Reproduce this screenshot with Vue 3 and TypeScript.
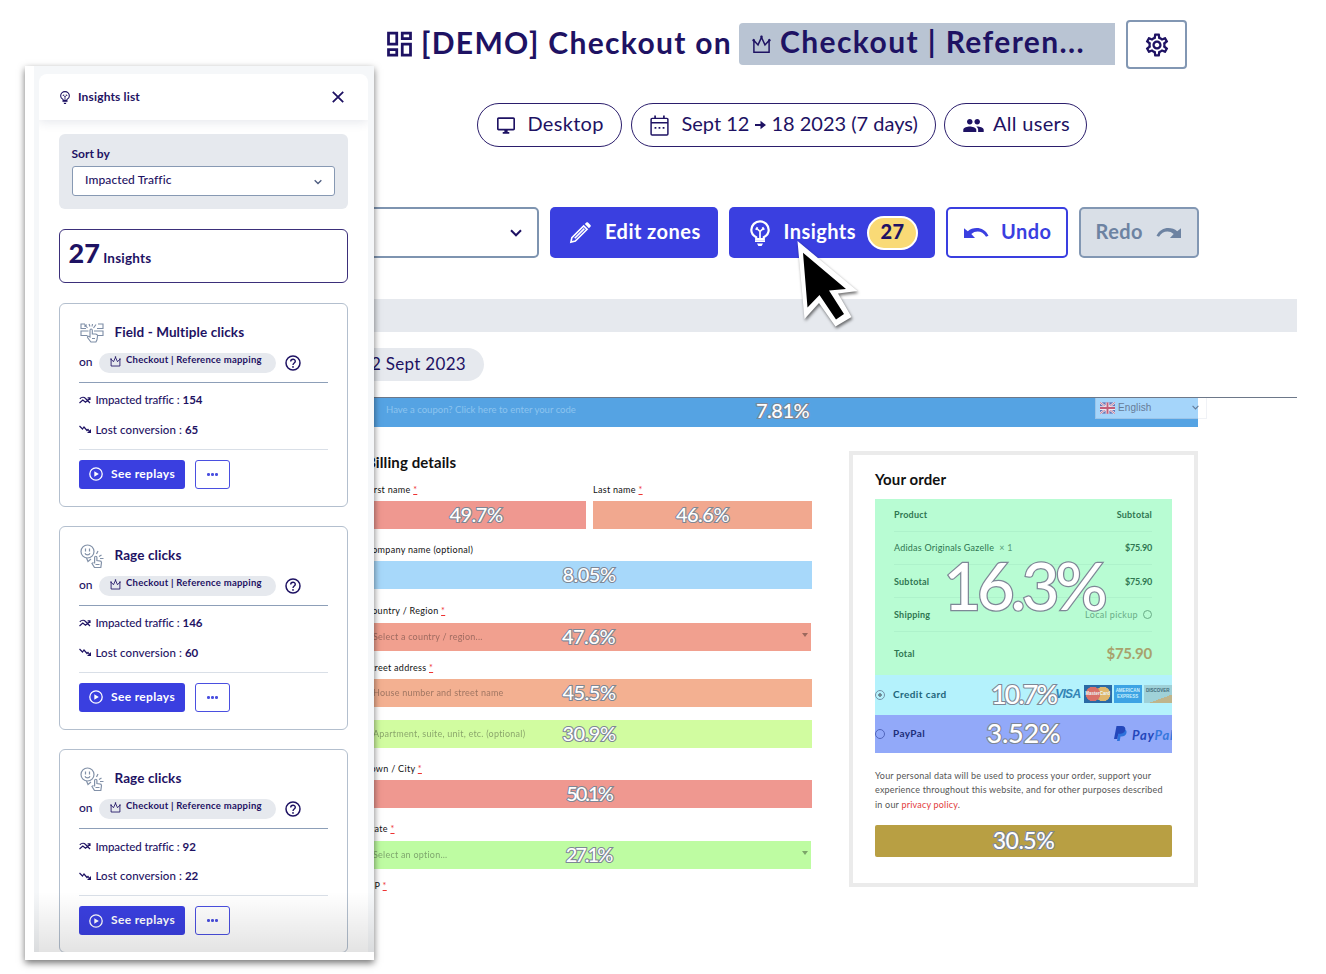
<script setup lang="ts">
interface Insight {
  kind: 'field' | 'rage'
  title: string
  traffic: number
  lost: number
}

interface Field {
  label?: string
  required?: boolean
  placeholder?: string
  value: string
  tone: string
  select?: boolean
  tight?: boolean
}

const insights: Insight[] = [
  { kind: 'field', title: 'Field - Multiple clicks', traffic: 154, lost: 65 },
  { kind: 'rage', title: 'Rage clicks', traffic: 146, lost: 60 },
  { kind: 'rage', title: 'Rage clicks', traffic: 92, lost: 22 },
]

const fields: Field[] = [
  { label: 'Company name (optional)', value: '8.05%', tone: 'sky' },
  { label: 'Country / Region', required: true, placeholder: 'Select a country / region...', value: '47.6%', tone: 'salmon', select: true },
  { label: 'Street address', required: true, placeholder: 'House number and street name', value: '45.5%', tone: 'orange' },
  { placeholder: 'Apartment, suite, unit, etc. (optional)', value: '30.9%', tone: 'lime' },
  { label: 'Town / City', required: true, value: '50.1%', tone: 'red', tight: true },
  { label: 'State', required: true, placeholder: 'Select an option...', value: '27.1%', tone: 'green', select: true, tight: true },
]
</script>

<template>
  <div class="screen">
    <svg class="defs" width="0" height="0" aria-hidden="true">
      <symbol id="crown" viewBox="0 0 18 18">
        <path d="M1.800 16.400V5.200L5.700 9.400 9 2.200l3.300 7.200 3.900-4.200v11.200z" fill="none" stroke="currentColor" stroke-width="1.400" />
        <circle cx="1.600" cy="5" r="1.200" fill="currentColor" /><circle cx="16.400" cy="5" r="1.200" fill="currentColor" /><circle cx="9" cy="1.600" r="1.200" fill="currentColor" />
      </symbol>
      <symbol id="bulb" viewBox="0 0 20 26">
        <path d="M6.200 19.200v-2C3.400 15.700 1.300 13.300 1.300 10a8.700 8.700 0 0 1 17.400 0c0 3.300-2.100 5.700-4.900 7.200v2z" fill="none" stroke="currentColor" stroke-width="2.200" />
        <path d="M10 18.500V11.500L6.300 8M10 11.500L13.700 8M5.800 9.800l1.700-2.600M14.200 9.800l-1.700-2.600" fill="none" stroke="currentColor" stroke-width="1.700" />
        <path d="M5 20.300h10v1.700H5zM7 23.400h6L11.600 26H8.400z" fill="currentColor" />
      </symbol>
      <symbol id="chevron" viewBox="0 0 12 8"><path d="M1 1.300l5 5 5-5" fill="none" stroke="currentColor" stroke-width="2" /></symbol>
      <symbol id="undo" viewBox="0 0 25 11" preserveAspectRatio="none">
        <path d="M0 1.200L3.800 4.200C9.500-.9 20.500-.4 24.500 8.800L22 9.800C18.800 4 12 2.800 7.300 7L11 11H0z" fill="currentColor" />
      </symbol>
    </svg>

    <main>
      <header class="title-row">
        <svg class="dash" viewBox="0 0 24 24"><path d="M19 5v2h-4V5h4M9 5v6H5V5h4m10 8v6h-4v-6h4M9 17v2H5v-2h4M21 3h-8v6h8V3zM11 3H3v10h8V3zm10 8h-8v10h8V11zm-10 4H3v6h8v-6z" fill="currentColor" /></svg>
        <h1>[DEMO] Checkout on</h1>
        <div class="page-chip"><svg><use href="#crown" /></svg><span>Checkout | Referen...</span></div>
        <button class="gear" aria-label="Settings">
          <svg viewBox="1.500 1.500 21 21"><path d="M19.430 12.980c.04-.32.070-.64.070-.98s-.03-.66-.07-.98l2.110-1.650c.19-.15.24-.42.120-.64l-2-3.460c-.09-.16-.26-.25-.44-.25-.06 0-.12.010-.17.030l-2.490 1c-.52-.4-1.080-.73-1.690-.98l-.38-2.650C14.460 2.180 14.250 2 14 2h-4c-.25 0-.46.180-.49.420l-.38 2.650c-.61.25-1.170.59-1.690.98l-2.490-1c-.06-.02-.12-.03-.18-.03-.17 0-.34.090-.43.250l-2 3.460c-.13.22-.07.490.120.640l2.110 1.650c-.04.320-.07.650-.07.980s.03.660.070.980l-2.110 1.650c-.19.150-.24.420-.12.640l2 3.460c.09.160.26.250.44.250.06 0 .12-.01.170-.03l2.490-1c.52.400 1.080.730 1.690.980l.38 2.650c.03.240.240.420.490.420h4c.25 0 .46-.18.490-.42l.38-2.650c.61-.25 1.170-.59 1.690-.98l2.490 1c.06.020.120.030.180.030.17 0 .34-.09.430-.25l2-3.460c.12-.22.070-.49-.12-.64l-2.110-1.650zm-1.980-1.710c.04.310.050.520.050.730s-.02.430-.05.730l-.14 1.130.890.700 1.080.840-.7 1.210-1.270-.51-1.040-.42-.9.680c-.43.320-.84.560-1.250.730l-1.060.43-.16 1.130-.2 1.350h-1.400l-.19-1.350-.16-1.130-1.060-.43c-.43-.18-.83-.41-1.230-.71l-.91-.7-1.060.43-1.270.51-.7-1.210 1.080-.84.890-.7-.14-1.130c-.03-.31-.05-.54-.05-.74s.02-.43.050-.73l.14-1.130-.89-.7-1.080-.84.700-1.210 1.270.51 1.040.42.900-.68c.43-.32.840-.56 1.250-.73l1.060-.43.160-1.130.2-1.350h1.390l.19 1.350.160 1.130 1.060.43c.43.180.830.410 1.230.71l.91.700 1.060-.43 1.270-.51.700 1.210-1.070.85-.89.700.140 1.130zM12 8c-2.210 0-4 1.790-4 4s1.790 4 4 4 4-1.790 4-4-1.790-4-4-4zm0 6c-1.100 0-2-.9-2-2s.9-2 2-2 2 .9 2 2-.9 2-2 2z" fill="currentColor" /></svg>
        </button>
      </header>

      <div class="pills">
        <div class="pill desktop"><svg viewBox="1 2 22 20"><path d="M21 2H3c-1.100 0-2 .9-2 2v12c0 1.100.9 2 2 2h7v2H8v2h8v-2h-2v-2h7c1.100 0 2-.9 2-2V4c0-1.100-.9-2-2-2zm0 14H3V4h18v12z" fill="currentColor" /></svg><span>Desktop</span></div>
        <div class="pill dates">
          <svg viewBox="0 0 18 20"><path d="M2 3.200h14a1 1 0 0 1 1 1V18a1 1 0 0 1-1 1H2a1 1 0 0 1-1-1V4.200a1 1 0 0 1 1-1zM1 7.300h16" fill="none" stroke="currentColor" stroke-width="1.400" /><path d="M4 .5h1.600v3H4zM12.400.5H14v3h-1.600zM4.300 11.500h1.700v1.600H4.300zM8.100 11.500h1.700v1.600H8.100zM12 11.500h1.700v1.600H12z" fill="currentColor" /></svg>
          <span>Sept 12</span><svg class="arrow" viewBox="0 0 12 10"><path d="M0 3.800h6V.4L12 5 6 9.600V6.200H0z" fill="currentColor" /></svg><span>18 2023 (7 days)</span>
        </div>
        <div class="pill users"><svg viewBox="1 5 22 14"><path d="M16 11c1.660 0 2.990-1.340 2.990-3S17.660 5 16 5s-3 1.340-3 3 1.340 3 3 3zm-8 0c1.660 0 2.990-1.340 2.990-3S9.660 5 8 5 5 6.340 5 8s1.340 3 3 3zm0 2c-2.330 0-7 1.170-7 3.500V19h14v-2.500c0-2.330-4.670-3.500-7-3.500zm8 0c-.29 0-.62.020-.97.050 1.160.84 1.970 1.970 1.970 3.450V19h6v-2.500c0-2.330-4.670-3.500-7-3.500z" fill="currentColor" /></svg><span>All users</span></div>
      </div>

      <div class="toolbar">
        <div class="dropdown"><svg><use href="#chevron" /></svg></div>
        <button class="tool edit"><svg viewBox="0 0 24 24"><path d="M2 22l1-4.600L15.300 5.100l3.600 3.600L6.600 21zM6 18L16 8" fill="none" stroke="currentColor" stroke-width="1.700" /><path d="M16.500 3.200l1.600-1.600c.5-.5 1.200-.5 1.700 0l2.600 2.600c.5.5.5 1.200 0 1.700l-1.600 1.600z" fill="currentColor" /></svg><span>Edit zones</span></button>
        <button class="tool insights"><svg><use href="#bulb" /></svg><span>Insights</span><b>27</b></button>
        <button class="tool undo"><svg><use href="#undo" /></svg><span>Undo</span></button>
        <button class="tool redo"><span>Redo</span><svg><use href="#undo" /></svg></button>
      </div>

      <div class="band"></div>
      <div class="date-row"><span>12 Sept 2023</span></div>

      <section class="site">
        <div class="coupon">
          <span>Have a coupon? Click here to enter your code</span>
          <strong class="pct">7.81%</strong>
          <div class="lang">
            <svg viewBox="0 0 16 12"><path fill="#6676b6" d="M0 0h16v12H0z" /><path d="M0 0l16 12M16 0L0 12" stroke="#e5e6f2" stroke-width="2.200" /><path d="M0 0l16 12M16 0L0 12" stroke="#c8657f" stroke-width=".8" /><path d="M8 0v12M0 6h16" stroke="#eceaf3" stroke-width="4" /><path d="M8 0v12M0 6h16" stroke="#c35d78" stroke-width="2" /></svg>
            <span>English</span><svg class="chev"><use href="#chevron" /></svg>
          </div>
        </div>

        <div class="columns">
          <form class="billing">
            <h2>Billing details</h2>
            <div class="names">
              <div class="group"><label>First name <i>*</i></label><div class="field red"><strong class="pct">49.7%</strong></div></div>
              <div class="group"><label>Last name <i>*</i></label><div class="field peach"><strong class="pct">46.6%</strong></div></div>
            </div>
            <div v-for="f in fields" :key="f.value" class="group">
              <label v-if="f.label">{{ f.label }} <i v-if="f.required">*</i></label>
              <div class="field" :class="[f.tone, { select: f.select }]">
                <span>{{ f.placeholder }}</span>
                <strong class="pct" :class="{ tight: f.tight }">{{ f.value }}</strong>
                <em v-if="f.select"></em>
              </div>
            </div>
            <label class="last">ZIP <i>*</i></label>
          </form>

          <aside class="order">
            <h2>Your order</h2>
            <div class="summary">
              <div class="line"><b>Product</b><b>Subtotal</b></div>
              <div class="line"><span>Adidas Originals Gazelle&nbsp; <small>× 1</small></span><b class="money">$75.90</b></div>
              <div class="line"><b>Subtotal</b><b class="money">$75.90</b></div>
              <div class="line"><b>Shipping</b><span class="pickup">Local pickup <i></i></span></div>
              <div class="line total"><b>Total</b><b class="sum">$75.90</b></div>
              <strong class="pct huge">16.3%</strong>
            </div>
            <div class="pay card">
              <i class="radio on"></i><b>Credit card</b>
              <strong class="pct">10.7%</strong>
              <div class="brands">
                <span class="visa">VISA</span>
                <span class="mc"><u>MasterCard</u></span>
                <span class="amex"><u>AMERICAN</u><u>EXPRESS</u></span>
                <span class="disc"><u>DISCOVER</u></span>
              </div>
            </div>
            <div class="pay paypal">
              <i class="radio"></i><b>PayPal</b>
              <strong class="pct">3.52%</strong>
              <div class="pp"><svg viewBox="0 0 13 15"><path d="M5 3h5c2.500.5 3 2.500 2.300 4.500-.7 2-2.400 3-4.800 3h-1L5.700 15H3z" fill="#2d72dc" /><path d="M2.500 0h5.200c3 0 4.100 1.700 3.500 4.100-.6 2.600-2.500 3.700-5 3.700H4.300L3.300 13H0z" fill="#2447bb" /></svg><span>Pay<u>Pal</u></span></div>
            </div>
            <p>Your personal data will be used to process your order, support your<br>experience throughout this website, and for other purposes described<br>in our <a>privacy policy</a>.</p>
            <div class="place"><strong class="pct">30.5%</strong></div>
          </aside>
        </div>
      </section>
    </main>

    <div class="panel">
      <div class="panel-bg">
        <div class="sheet">
          <div class="sheet-head"><svg class="bulb"><use href="#bulb" /></svg><span>Insights list</span><svg class="close" viewBox="0 0 12 12"><path d="M.8.8l10.400 10.400M11.200.8L.8 11.200" stroke="currentColor" stroke-width="1.800" /></svg></div>
          <div class="sheet-body">
            <div class="sort"><label>Sort by</label><div class="sort-select"><span>Impacted Traffic</span><svg><use href="#chevron" /></svg></div></div>
            <div class="count"><b>27</b><span>Insights</span></div>
            <article v-for="(n, i) in insights" :key="i" class="insight">
              <div class="head">
                <svg v-if="n.kind === 'field'" viewBox="0 0 24 20" fill="none" stroke="#7d8da6" stroke-width="1.100"><path d="M6 5.500H1V1h4M17 5.500h6V1h-5M5 2l2.500 3M5 4V2h2M9 1l1 2.500M12.500 1l-.5 2.500M16 1.500L13.500 5M7.500 12.500H1V8h7.500M14 8h9v4.500h-6M10 14V7.200c0-1.700 2.300-1.700 2.300 0V11h3c1.600 0 2.400.8 2.200 2.400l-.6 3.600-1 2h-5l-3.400-4.500c-.5-1 .7-1.700 1.500-1zM12 15.500h3" /></svg>
                <svg v-else viewBox="0 0 24 24" fill="none" stroke="#8291a8" stroke-width="1.200"><circle cx="7.500" cy="7.500" r="6.500" /><path d="M5.500 4.500v3M9.500 4.500v3M5 9.300c.8 2.200 4.200 2.200 5 0M6.500 14l1.500 3.500 3-2.500M13.500 18.500l-1.500 1 2.500 4h6.300l.7-5c0-1-.8-1.600-2-1.600l-2.600-.4V13.500c0-1.700-2.300-1.700-2.300 0v6M15.500 20.500h4M16.500 10l1.500-3M19 12.500l2.500-1.500M20 14.500h3.500" /></svg>
                <h3>{{ n.title }}</h3>
              </div>
              <div class="where"><span>on</span><div class="chip"><svg><use href="#crown" /></svg><span>Checkout | Reference mapping</span></div>
                <svg class="help" viewBox="0 0 16 16"><circle cx="8" cy="8" r="7" fill="none" stroke="currentColor" stroke-width="1.500" /><path d="M5.700 6.500c0-3 4.600-3 4.600-.2C10.300 8 8 8 8 9.900" fill="none" stroke="currentColor" stroke-width="1.400" /><circle cx="8" cy="11.900" r=".9" fill="currentColor" /></svg>
              </div>
              <div class="stats">
                <div><svg viewBox="0 0 12 8" fill="none" stroke="currentColor" stroke-width="1.200"><path d="M.5 7l3.300-3 2.700 2.300L11 2.500M.8 2.800C3 .8 5 .8 6.500 2.500L11 7M8.600 1.800H11V4" /></svg><span>Impacted traffic :</span><b>{{ n.traffic }}</b></div>
                <div class="lost"><svg viewBox="0 0 12 8" fill="none" stroke="currentColor" stroke-width="1.200"><path d="M.5 1l3 3 1.500-2L8 5.500l1-1L11 7" /><path d="M12 4v4H8z" fill="currentColor" stroke="none" /></svg><span>Lost conversion :</span><b>{{ n.lost }}</b></div>
              </div>
              <div class="actions">
                <button class="replay"><svg viewBox="0 0 14 14"><circle cx="7" cy="7" r="6.200" fill="none" stroke="currentColor" stroke-width="1.300" /><path d="M5.300 4.300L9.800 7l-4.500 2.700z" fill="currentColor" /></svg><span>See replays</span></button>
                <button class="more"><i></i><i></i><i></i></button>
              </div>
            </article>
          </div>
        </div>
      </div>
      <div class="fade"></div>
    </div>

    <svg class="cursor" viewBox="0 0 64 90"><path d="M1.500 1L61.500 51 42 53.500 55.500 77 39.500 86.500 23 63 8.500 79z" fill="#fff" /><path d="M7 12.700L50 49 33 50.500 48 74l-8 5.500L23.500 55l-12 12.500z" fill="#000" /></svg>
  </div>
</template>

<style>
body { margin: 0; background: #fff; }
</style>

<style scoped>
* { box-sizing: border-box; }
.screen { position: relative; width: 1326px; height: 974px; overflow: hidden; color: #1e1263; font-family: Lato, "Liberation Sans", sans-serif; background: #fff; white-space: nowrap; }
.defs { position: absolute; }
svg { display: block; flex: none; }
button { font: inherit; margin: 0; padding: 0; background: none; border: 0; color: inherit; }
h1, h2, h3, p { margin: 0; }
i, em { font-style: normal; }
u { text-decoration: none; }
main { display: flex; flex-direction: column; }

.title-row { display: flex; height: 69px; padding: 20px 0 0 383px; }
.dash { width: 33px; height: 34px; margin-top: 7px; }
h1 { width: 318px; margin: 1px 0 0 5px; font-size: 30px; line-height: 42px; font-weight: 700; letter-spacing: 1.320px; }
.page-chip { display: flex; align-items: center; width: 376px; height: 42px; margin: 3px 0 0; padding-left: 13px; border-radius: 4px 0 0 4px; background: #b9c4d3; font-size: 30px; font-weight: 700; letter-spacing: 1.400px; gap: 9px; }
.page-chip svg { width: 19px; height: 19px; }
.page-chip span { line-height: 36px; padding-bottom: 6px; }
.gear { width: 61px; height: 49px; margin-left: 11px; display: grid; place-items: center; border: 2px solid #8297b3; border-radius: 4px; }
.gear svg { width: 24px; height: 24px; }

.pills { display: flex; gap: 8.500px; margin: 34px 0 0 477px; }
.pill { display: flex; align-items: center; height: 44px; border: 1.500px solid #2b1e6c; border-radius: 22px; font-size: 20px; line-height: 38px; letter-spacing: .3px; }
.pill span { padding-bottom: 4px; }
.desktop { width: 145px; padding-left: 19px; gap: 12.500px; }
.desktop svg { width: 18px; height: 17px; }
.dates { width: 305px; padding-left: 18px; letter-spacing: 0; }
.dates svg { width: 19px; height: 21px; margin-right: 13px; }
.dates .arrow { width: 11px; height: 10px; margin: 0 5px 0 6px; }
.users { width: 143px; padding-left: 18px; gap: 9px; }
.users svg { width: 21px; height: 13px; }

.toolbar { display: flex; gap: 11px; margin: 60px 0 0 300px; height: 51px; }
.dropdown { width: 239px; border: 2px solid #7e94b0; border-radius: 5px; display: flex; align-items: center; justify-content: flex-end; padding-right: 15px; }
.dropdown svg { width: 12px; height: 8px; }
.tool { display: flex; align-items: center; border-radius: 5px; font-size: 20px; font-weight: 700; line-height: 24px; letter-spacing: .45px; }
.tool span { padding-bottom: 3px; }
.edit { width: 168px; padding-left: 19px; gap: 13px; background: #3a3fe0; color: #fff; }
.edit svg { width: 23px; height: 23px; }
.insights { width: 206px; padding-left: 21px; background: #3a3fe0; color: #fff; }
.insights svg { width: 20px; height: 26px; margin-right: 13.500px; }
.insights b { width: 51px; height: 34px; margin-left: 11px; border: 2px solid #fff; border-radius: 17px; background: #f9da76; color: #1e1263; text-align: center; line-height: 27px; }
.undo { width: 122px; padding-left: 16px; gap: 12px; border: 2.500px solid #3a3fe0; color: #3a3fe0; }
.undo svg, .redo svg { width: 25px; height: 11px; }
.redo { width: 120px; padding-left: 14.500px; gap: 13px; border: 2.500px solid #8297b3; background: #d9dfe7; color: #6d83a2; }
.redo svg { transform: scaleX(-1); }

.band { width: 997px; height: 33px; margin: 41px 0 0 300px; background: #e6e9ee; }
.date-row { display: flex; width: 997px; height: 66px; margin-left: 300px; padding: 16px 0 0 40px; border-bottom: 1.500px solid #6d7889; }
.date-row span { width: 144px; height: 33px; border-radius: 17px; background: #e6e9ee; text-align: right; padding-right: 18px; font-size: 17px; line-height: 31px; letter-spacing: .3px; }

.site { color: #111; font-size: 9px; }
.coupon { display: flex; width: 907px; height: 29px; margin-left: 300px; padding-left: 86px; background: linear-gradient(#55a3e3, #55a3e3) 0 0 / 898px 29px no-repeat; }
.coupon > span { width: 370px; color: #8cc4ef; line-height: 24px; letter-spacing: .02px; font-size: 9.500px; }
.pct { color: #fff; -webkit-text-stroke: 2.200px #7e8796; paint-order: stroke fill; font-weight: 500; font-size: 20px; letter-spacing: -.5px; }
.pct.tight { letter-spacing: -2px; }
.coupon .pct { line-height: 24px; width: 339px; }
.lang { display: flex; align-items: center; width: 112px; height: 21px; padding: 0 7px 1px 4px; border: 1px solid rgba(225, 230, 238, .5); border-top: 0; background: linear-gradient(#a5d5fa, #a5d5fa) 0 0 / 102px 100% no-repeat; color: #657b98; font: 10px "Liberation Sans", sans-serif; letter-spacing: .1px; }
.lang svg { width: 15px; height: 12px; margin-right: 3px; }
.lang .chev { width: 7px; height: 5px; margin: 0 0 0 auto; }

.columns { display: flex; }
.billing { width: 446px; margin: 24px 37px 0 366px; }
h2 { font-size: 15px; line-height: 22px; font-weight: 700; letter-spacing: .1px; }
.names { display: grid; grid-template-columns: 220px 219px; gap: 7px; margin-top: 6px; }
label { display: block; height: 20px; line-height: 21px; font-size: 9px; letter-spacing: .3px; }
label i { color: #e33; text-decoration: underline; }
.group + .group, .names + .group { margin-top: 10px; }
.names .group + .group { margin-top: 0; }
.group .field { margin-top: 2px; }
.field { display: flex; align-items: center; justify-content: center; height: 28px; position: relative; }
.field .pct { line-height: 26px; padding-bottom: 2px; }
.field span { position: absolute; left: 7px; opacity: .38; font-size: 9px; letter-spacing: .23px; line-height: 28px; }
.field.select { width: 445px; margin-top: 2.500px; }
.field em { position: absolute; right: 3px; top: 10px; border: 3px solid transparent; border-top: 4px solid rgba(0, 0, 0, .35); border-bottom: 0; }
.billing > .group:nth-child(4) { margin-top: 11px; }
.billing > .group:nth-child(5) { margin-top: 6.500px; }
.billing > .group:nth-child(6) { margin-top: 13px; }
.billing > .group:nth-child(6) .field { margin-top: 0; }
.red { background: #ef9890; } .peach { background: #f1a88f; } .sky { background: #a7d8fa; }
.salmon { background: #f1a08f; } .orange { background: #f3b091; } .lime { background: #d1fca0; } .green { background: #befca2; }
.last { margin-top: 6px; }

.order { width: 349px; height: 436px; margin-top: 23.500px; border: 4px solid #ebebeb; padding: 13px 22px; }
.summary { position: relative; height: 176px; margin-top: 9px; width: 297px; padding: 0 20px 0 19px; background: #b8fcd3; color: #2f7651; }
.line { display: flex; justify-content: space-between; align-items: center; height: 33.300px; border-bottom: 1px solid #aef2cb; font-size: 9px; letter-spacing: .22px; }
.line.total { height: 43px; border: 0; }
.line small { color: #5b9f7b; font-size: 9px; }
.money { letter-spacing: -.2px; }
.sum { font-size: 15px; color: #a8a16c; letter-spacing: -.25px; }
.pickup { display: flex; align-items: center; gap: 5px; color: #69ad87; letter-spacing: .35px; }
.pickup i { width: 9px; height: 9px; border: 1px solid #69ad87; border-radius: 50%; }
.huge { position: absolute; inset: 0; text-align: center; font-size: 65px; line-height: 172px; letter-spacing: -4.200px; font-weight: 500; padding-right: 0; -webkit-text-stroke: 2.500px #7e8796; }
.pay { position: relative; display: flex; align-items: center; width: 297px; height: 40px; background: #b4f2fc; color: #20657a; font-size: 10px; letter-spacing: .4px; overflow: hidden; }
.pay b { padding-bottom: 2px; }
.pay.paypal { height: 38px; background: #92a9f9; color: #1c2e79; }
.radio { width: 10px; height: 10px; margin-right: 8px; border: 1px solid #7391a8; border-radius: 50%; }
.radio.on { background: radial-gradient(#6c8590 0 1.500px, transparent 2px); }
.paypal .radio { border-color: #5166bd; }
.pay .pct { position: absolute; inset: 0; text-align: center; font-size: 27px; line-height: 38px; letter-spacing: -2px; }
.paypal .pct { line-height: 36px; letter-spacing: -.2px; }
.brands { position: absolute; right: 0; top: 10px; display: flex; gap: 1.500px; }
.brands span { display: flex; flex-direction: column; align-items: center; justify-content: center; width: 28.500px; height: 18px; font: bold 4.500px/6px "Liberation Sans", sans-serif; letter-spacing: 0; }
.brands .visa { font: italic bold 12px "Liberation Sans", sans-serif; color: #3284b5; letter-spacing: -.7px; }
.brands .mc { background: radial-gradient(circle at 9px 9px, #d97068 0 7px, transparent 7.500px), radial-gradient(circle at 19px 9px, #dfb66b 0 7px, transparent 7.500px), #2a6aa5; color: #e9f6f9; }
.brands .amex { background: #3ca3e4; color: #c9eefb; }
.brands .disc { background: linear-gradient(160deg, #9fd1d8 0 70%, #bfb58c 70%); color: #3f6c7a; justify-content: flex-start; padding-top: 3px; }
.pp { position: absolute; right: -2px; top: 12px; display: flex; gap: 5px; align-items: center; color: #2447bb; font: italic bold 13px/16px Lato, sans-serif; letter-spacing: .8px; }
.pp svg { width: 13px; height: 15px; margin-top: -2px; }
.pp u { color: #3577dd; }
.order p { margin-top: 16px; color: #555; font-size: 9px; line-height: 14.500px; letter-spacing: .2px; }
.order a { color: #e23a3a; }
.place { width: 297px; height: 32px; margin-top: 13px; background: #b89f43; border-radius: 2px; text-align: center; line-height: 30px; }
.place .pct { font-size: 23px; }

.panel { position: absolute; left: 25px; top: 66px; width: 349px; height: 894px; padding: 0 0 8px 9px; background: #fff; box-shadow: 0 3px 7px rgba(0, 0, 0, .55); }
.panel-bg { height: 886px; padding: 8px 6px 0 5px; background: #f5f7f9; }
.sheet { height: 878px; border-radius: 8px 8px 0 0; background: #fff; overflow: hidden; font-weight: 500; }
.sheet-head { display: flex; align-items: center; height: 46px; padding: 0 24px 0 21px; box-shadow: 0 2px 10px rgba(40, 60, 100, .12); font-size: 12px; font-weight: 700; letter-spacing: .15px; }
.sheet-head span { padding-bottom: 2px; }
.sheet-head .bulb { width: 10px; height: 13px; margin-right: 8px; }
.close { width: 12px; height: 12px; margin-left: auto; }
.sheet-body { padding: 13.500px 20px 0 19.500px; }
.sort { height: 75px; padding: 11px 13px 0; border-radius: 6px; background: #e6e9ee; }
.sort label { height: 21px; line-height: 18px; font-size: 12px; font-weight: 700; letter-spacing: 0; }
.sort-select { display: flex; justify-content: space-between; height: 30px; padding: 0 12px 0 12.500px; border: 1px solid #8799b3; border-radius: 3px; background: #fff; font-size: 12px; line-height: 25px; letter-spacing: .1px; }
.sort-select svg { width: 8px; height: 6px; margin-top: 12px; color: #4e5d80; }
.count { display: flex; align-items: baseline; gap: 3px; height: 54px; margin-top: 20.500px; padding: 3px 9px; border: 1px solid #3b2f7a; border-radius: 6px; font-size: 13.500px; font-weight: 700; line-height: 40px; letter-spacing: .2px; }
.count b { font-size: 27px; }
.insight { height: 203.500px; margin-top: 20px; padding: 15px 19px 0 19.500px; border: 1px solid #b3bfce; border-radius: 6px; font-size: 12px; }
.insight + .insight { margin-top: 19.700px; }
.head { display: flex; height: 26px; align-items: center; gap: 10.500px; padding-left: 1px; }
.head svg { width: 24px; height: 24px; margin-top: 2px; }
h3 { font-size: 13.500px; letter-spacing: .1px; }
.where { display: flex; align-items: center; height: 37px; padding-bottom: 4px; }
.where > span { width: 13px; }
.chip { display: flex; width: 177px; height: 20px; margin: 2px 9px 0 7px; padding-left: 11px; align-items: center; gap: 5px; border-radius: 10px; background: #e6e9ee; font-size: 9.500px; font-weight: 700; letter-spacing: .25px; }
.chip span { padding-bottom: 7px; line-height: 13px; }
.chip svg { width: 11px; height: 11px; margin-top: -3px; }
.help { width: 16px; height: 16px; margin-top: 3px; }
.stats { height: 67.500px; border: solid #d9dfe7; border-width: 1px 0; border-top-color: #8d9fb8; padding-top: 2px; }
.stats div { display: flex; align-items: center; height: 29.500px; font-size: 11.500px; letter-spacing: -.12px; }
.stats .lost { letter-spacing: .08px; }
.stats svg { width: 12px; height: 8px; margin-right: 4.500px; }
.stats b { margin-left: 3px; letter-spacing: 0; }
.actions { display: flex; gap: 10px; margin-top: 10px; }
.actions button { display: flex; align-items: center; justify-content: center; height: 29.500px; border-radius: 3px; }
.actions .replay { width: 106px; gap: 8px; background: #3a3fe0; color: #fff; font-weight: 700; font-size: 12px; letter-spacing: .35px; }
.replay span { padding-bottom: 2px; }
.replay svg { width: 14px; height: 14px; }
.actions .more { width: 35px; gap: 1.500px; border: 1.500px solid #4a4fe0; }
.more i { width: 2.500px; height: 2.500px; border-radius: 50%; background: #4a4fe0; }
.fade { position: absolute; inset: auto 0 8px 9px; height: 60px; background: linear-gradient(rgba(0, 0, 0, 0), rgba(0, 0, 0, .11)); }

.cursor { position: absolute; left: 796px; top: 240px; width: 64px; height: 90px; filter: drop-shadow(1px 2px 1.500px rgba(0, 0, 0, .55)); }
</style>
